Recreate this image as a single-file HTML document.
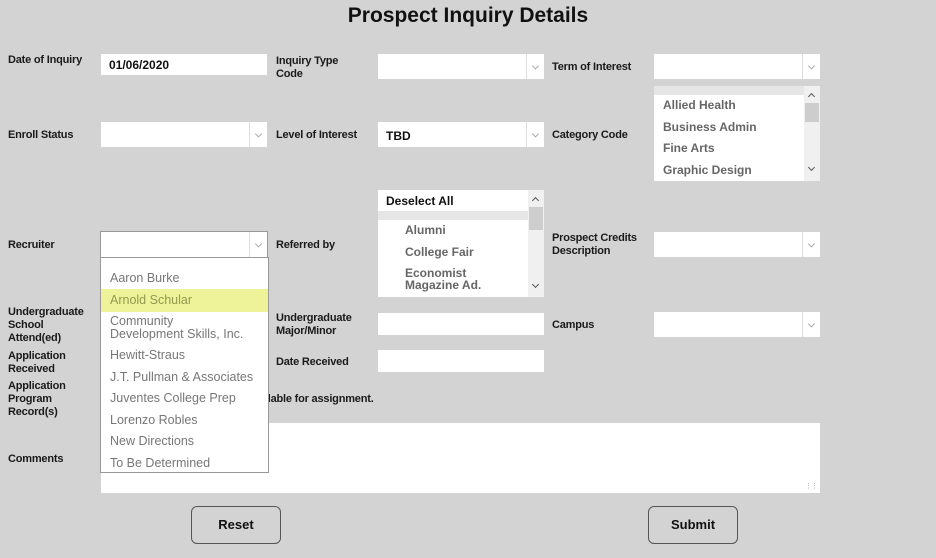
<!DOCTYPE html>
<html><head><meta charset="utf-8"><style>
*{box-sizing:border-box;margin:0;padding:0}
body{width:936px;height:558px;background:#d3d3d3;font-family:"Liberation Sans",sans-serif;position:relative;overflow:hidden;color:#111}
.a{position:absolute}
.l{position:absolute;font-size:11px;font-weight:bold;line-height:13px;color:#1a1a1a;letter-spacing:-0.2px}
.in{position:absolute;background:#fff}
.sel{position:absolute;background:#fff}
.sel:after{content:"";position:absolute;right:0;top:0;bottom:0;width:17px;border-left:1px solid #ddd}
.chev{position:absolute;right:6px;top:50%;width:5px;height:5px;border-right:1px solid #aaa;border-bottom:1px solid #aaa;transform:translateY(-70%) rotate(45deg);z-index:2}
.lb{position:absolute;background:#fff;overflow:hidden}
.sb{position:absolute;right:0;top:0;bottom:0;width:16px;background:#f0f0f0}
.it{position:absolute;font-size:12px;font-weight:bold;color:#666;line-height:13px}
.dd{position:absolute;left:100px;top:257px;width:169px;height:216px;background:#fff;border:1px solid #999;z-index:5}
.di{position:absolute;left:9px;font-size:12.5px;color:#777;line-height:13px;white-space:nowrap}
.btn{position:absolute;width:90px;height:38px;border:1px solid #555;border-radius:6px;font-size:13px;font-weight:bold;text-align:center;line-height:36px;background:#d3d3d3}
</style></head><body>
<div class="a" style="left:0;width:936px;top:4px;text-align:center;font-size:21px;font-weight:bold">Prospect Inquiry Details</div>

<div class="l" style="left:8px;top:54px">Date of Inquiry</div>
<div class="in" style="left:101px;top:54px;width:166px;height:21px;font-size:12px;font-weight:bold;padding:4px 0 0 8px">01/06/2020</div>
<div class="l" style="left:276px;top:55px">Inquiry Type<br>Code</div>
<div class="sel" style="left:378px;top:54px;width:166px;height:25px"><i class="chev"></i></div>
<div class="l" style="left:552px;top:61px">Term of Interest</div>
<div class="sel" style="left:654px;top:54px;width:166px;height:25px"><i class="chev"></i></div>

<div class="l" style="left:8px;top:129px">Enroll Status</div>
<div class="sel" style="left:101px;top:122px;width:166px;height:25px"><i class="chev"></i></div>
<div class="l" style="left:276px;top:129px">Level of Interest</div>
<div class="sel" style="left:378px;top:122px;width:166px;height:25px;font-size:12px;font-weight:bold;padding:7px 0 0 8px">TBD<i class="chev"></i></div>
<div class="l" style="left:552px;top:129px">Category Code</div>
<div class="lb" style="left:654px;top:86px;width:166px;height:95px">
 <div class="a" style="left:0;top:0;width:150px;height:9px;background:#e6e6e6"></div>
 <div class="it" style="left:9px;top:13px">Allied Health</div>
 <div class="it" style="left:9px;top:35px">Business Admin</div>
 <div class="it" style="left:9px;top:56px">Fine Arts</div>
 <div class="it" style="left:9px;top:78px">Graphic Design</div>
 <div class="sb"><div class="a" style="left:1px;top:17px;width:14px;height:19px;background:#cdcdcd"></div><div class="a" style="left:5px;top:8px;width:5px;height:5px;border-left:1px solid #555;border-top:1px solid #555;transform:rotate(45deg)"></div><div class="a" style="left:5px;top:79px;width:5px;height:5px;border-right:1px solid #555;border-bottom:1px solid #555;transform:rotate(45deg)"></div></div>
</div>

<div class="l" style="left:8px;top:239px">Recruiter</div>
<div class="sel" style="left:100px;top:231px;width:168px;height:27px;border:1px solid #999"><i class="chev"></i></div>
<div class="dd">
 <div class="a" style="left:0;top:31px;width:167px;height:23px;background:#eef39a"></div>
 <div class="di" style="top:14px">Aaron Burke</div>
 <div class="di" style="top:36px;color:#8f9a4e">Arnold Schular</div>
 <div class="di" style="top:57px">Community<br>Development Skills, Inc.</div>
 <div class="di" style="top:91px">Hewitt-Straus</div>
 <div class="di" style="top:113px">J.T. Pullman &amp; Associates</div>
 <div class="di" style="top:134px">Juventes College Prep</div>
 <div class="di" style="top:156px">Lorenzo Robles</div>
 <div class="di" style="top:177px">New Directions</div>
 <div class="di" style="top:199px">To Be Determined</div>
</div>
<div class="l" style="left:276px;top:239px">Referred by</div>
<div class="lb" style="left:378px;top:190px;width:166px;height:107px">
 <div class="a" style="left:8px;top:4px;font-size:12px;font-weight:bold;color:#111">Deselect All</div>
 <div class="a" style="left:0;top:21px;width:150px;height:9px;background:#e6e6e6"></div>
 <div class="it" style="left:27px;top:34px">Alumni</div>
 <div class="it" style="left:27px;top:56px">College Fair</div>
 <div class="it" style="left:27px;top:77px;line-height:12px">Economist<br>Magazine Ad.</div>
 <div class="sb"><div class="a" style="left:1px;top:17px;width:14px;height:23px;background:#cdcdcd"></div><div class="a" style="left:5px;top:8px;width:5px;height:5px;border-left:1px solid #555;border-top:1px solid #555;transform:rotate(45deg)"></div><div class="a" style="left:5px;top:92px;width:5px;height:5px;border-right:1px solid #555;border-bottom:1px solid #555;transform:rotate(45deg)"></div></div>
</div>
<div class="l" style="left:552px;top:232px">Prospect Credits<br>Description</div>
<div class="sel" style="left:654px;top:232px;width:166px;height:25px"><i class="chev"></i></div>

<div class="l" style="left:8px;top:306px">Undergraduate<br>School<br>Attend(ed)</div>
<div class="l" style="left:276px;top:312px">Undergraduate<br>Major/Minor</div>
<div class="in" style="left:378px;top:313px;width:166px;height:22px"></div>
<div class="l" style="left:552px;top:319px">Campus</div>
<div class="sel" style="left:654px;top:312px;width:166px;height:25px"><i class="chev"></i></div>

<div class="l" style="left:8px;top:350px">Application<br>Received</div>
<div class="l" style="left:276px;top:356px">Date Received</div>
<div class="in" style="left:378px;top:350px;width:166px;height:22px"></div>

<div class="l" style="left:8px;top:380px">Application<br>Program<br>Record(s)</div>
<div class="l" style="left:178px;top:393px">No programs available for assignment.</div>

<div class="l" style="left:8px;top:453px">Comments</div>
<div class="in" style="left:101px;top:423px;width:719px;height:70px"><div class="a" style="right:3px;bottom:3px;font-size:7px;color:#999;letter-spacing:-1px">&#8942;&#8942;</div></div>

<div class="btn" style="left:191px;top:506px">Reset</div>
<div class="btn" style="left:648px;top:506px">Submit</div>
</body></html>
